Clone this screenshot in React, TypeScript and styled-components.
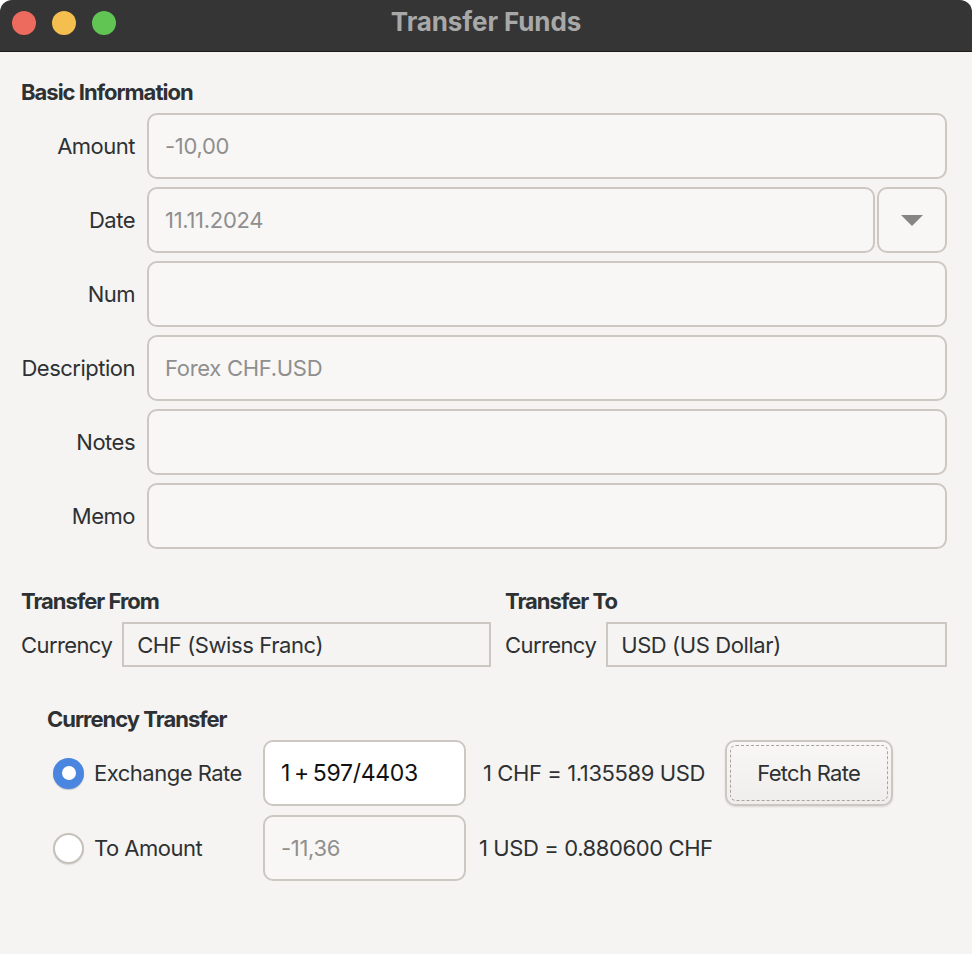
import styled, { createGlobalStyle } from "styled-components";

const GlobalStyle = createGlobalStyle`
  html, body {
    margin: 0;
    padding: 0;
    background: #ffffff;
  }
  body {
    font-family: Inter, "Noto Sans", sans-serif;
  }
`;

const Window = styled.div`
  width: 972px;
  height: 954px;
  display: flex;
  flex-direction: column;
  background: #f5f4f2;
  border-radius: 12px 12px 0 0;
  overflow: hidden;
  color: #2c2c2c;
`;

const TitleBar = styled.div`
  height: 52px;
  flex-shrink: 0;
  background: #353535;
  border-bottom: 1px solid #1c1c1c;
  display: flex;
  align-items: center;
  position: relative;
  box-sizing: border-box;
`;

const Lights = styled.div`
  display: flex;
  gap: 16px;
  padding-left: 12px;
  padding-bottom: 5px;
`;

const Light = styled.span<{ $color: string }>`
  width: 24px;
  height: 24px;
  border-radius: 50%;
  background: ${(p) => p.$color};
`;

const Title = styled.div`
  position: absolute;
  left: 0;
  right: 0;
  top: 6px;
  text-align: center;
  font-size: 26px;
  font-weight: 700;
  letter-spacing: -0.1px;
  color: #a8a8a8;
`;

const Body = styled.div`
  padding: 26px 25px 0 21px;
  display: flex;
  flex-direction: column;
`;

const SectionTitle = styled.div<{ $indent?: number }>`
  font-size: 22px;
  font-weight: 700;
  letter-spacing: -1px;
  color: #2e3133;
  margin-left: ${(p) => p.$indent ?? 0}px;
  height: 28px;
  line-height: 28px;
`;

const FormGrid = styled.div`
  display: grid;
  grid-template-columns: 114px 1fr;
  column-gap: 12px;
  row-gap: 8px;
  margin-top: 7px;
  align-items: center;
`;

const Label = styled.div`
  text-align: right;
  font-size: 22px;
  letter-spacing: -0.5px;
  color: #2e3133;
`;

const Field = styled.div<{ $white?: boolean }>`
  height: 66px;
  box-sizing: border-box;
  border: 2px solid #ccc7c1;
  border-radius: 10px;
  background: ${(p) => (p.$white ? "#ffffff" : "#f8f7f5")};
  display: flex;
  align-items: center;
  padding: 0 16px;
  font-size: 22px;
  letter-spacing: -0.3px;
  color: #8f8f8f;
`;

const DateRow = styled.div`
  display: flex;
  gap: 2px;
  & > ${Field}:first-child {
    flex: 1;
  }
`;

const DropButton = styled(Field)`
  width: 70px;
  justify-content: center;
  padding: 0;
`;

const Triangle = styled.span`
  width: 0;
  height: 0;
  border-left: 11px solid transparent;
  border-right: 11px solid transparent;
  border-top: 11px solid #858585;
`;

const TransferRow = styled.div`
  display: grid;
  grid-template-columns: 470px 1fr;
  column-gap: 14px;
  margin-top: 38px;
`;

const TransferCol = styled.div`
  display: flex;
  flex-direction: column;
  gap: 7px;
`;

const CurrencyLine = styled.div`
  display: flex;
  align-items: center;
  gap: 10px;
`;

const PlainLabel = styled.div`
  font-size: 22px;
  letter-spacing: -0.6px;
  color: #2e3133;
`;

const CurrencyBox = styled.div`
  flex: 1;
  height: 45px;
  box-sizing: border-box;
  border: 2px solid #ccc7c1;
  background: #f5f4f2;
  display: flex;
  align-items: center;
  padding: 0 13px;
  font-size: 22px;
  letter-spacing: -0.4px;
  color: #2e3133;
`;

const CurrencyTransfer = styled.div`
  margin-top: 38px;
  display: flex;
  flex-direction: column;
`;

const RateGrid = styled.div`
  display: grid;
  grid-template-columns: 210px 203px auto auto;
  row-gap: 9px;
  align-items: center;
  margin-top: 7px;
  margin-left: 32px;
  justify-content: start;
`;

const RadioLabel = styled.label`
  display: flex;
  align-items: center;
  gap: 10px;
  font-size: 22px;
  letter-spacing: -0.5px;
  color: #2e3133;
`;

const Radio = styled.span<{ $checked?: boolean }>`
  width: 31px;
  height: 31px;
  box-sizing: border-box;
  border-radius: 50%;
  display: flex;
  align-items: center;
  justify-content: center;
  ${(p) =>
    p.$checked
      ? `background: #4a85e0; box-shadow: 0 1px 1px rgba(0,0,0,0.2);`
      : `background: #ffffff; border: 2px solid #c6c1bb; box-shadow: 0 1px 1px rgba(0,0,0,0.1);`}
  &::after {
    content: "";
    display: ${(p) => (p.$checked ? "block" : "none")};
    width: 14px;
    height: 14px;
    border-radius: 50%;
    background: #ffffff;
  }
`;

const RateText = styled.div<{ $pad: number }>`
  font-size: 22px;
  letter-spacing: -0.4px;
  color: #2e3133;
  padding-left: ${(p) => p.$pad}px;
  white-space: nowrap;
`;

const FetchButton = styled.button`
  margin-left: 12px;
  width: 168px;
  height: 66px;
  border: 2px solid #ccc7c1;
  border-radius: 10px;
  background: linear-gradient(#f8f7f5, #efeeec);
  box-shadow: 0 1px 2px rgba(0, 0, 0, 0.12);
  font-family: inherit;
  font-size: 22px;
  letter-spacing: -0.7px;
  color: #2e3133;
  padding: 3px;
  display: flex;
`;

const FocusRing = styled.span`
  flex: 1;
  border: 1.5px dashed #a8a39e;
  border-radius: 6px;
  display: flex;
  align-items: center;
  justify-content: center;
`;

const ValueText = styled.span<{ $dark?: boolean }>`
  color: ${(p) => (p.$dark ? "#111111" : "#8f8f8f")};
  font-size: ${(p) => (p.$dark ? "23px" : "22px")};
`;

const rows: { label: string; value?: string }[] = [
  { label: "Amount", value: "-10,00" },
  { label: "Date", value: "11.11.2024" },
  { label: "Num" },
  { label: "Description", value: "Forex CHF.USD" },
  { label: "Notes" },
  { label: "Memo" },
];

export default function App() {
  return (
    <>
      <GlobalStyle />
      <Window>
        <TitleBar>
          <Lights>
            <Light $color="#ed6a5e" />
            <Light $color="#f5bf4f" />
            <Light $color="#61c554" />
          </Lights>
          <Title>Transfer Funds</Title>
        </TitleBar>
        <Body>
          <SectionTitle>Basic Information</SectionTitle>
          <FormGrid>
            {rows.flatMap((r) => [
              <Label key={r.label + "-l"}>{r.label}</Label>,
              r.label === "Date" ? (
                <DateRow key={r.label + "-f"}>
                  <Field>{r.value}</Field>
                  <DropButton>
                    <Triangle />
                  </DropButton>
                </DateRow>
              ) : (
                <Field key={r.label + "-f"}>{r.value}</Field>
              ),
            ])}
          </FormGrid>

          <TransferRow>
            <TransferCol>
              <SectionTitle>Transfer From</SectionTitle>
              <CurrencyLine>
                <PlainLabel>Currency</PlainLabel>
                <CurrencyBox>CHF (Swiss Franc)</CurrencyBox>
              </CurrencyLine>
            </TransferCol>
            <TransferCol>
              <SectionTitle>Transfer To</SectionTitle>
              <CurrencyLine>
                <PlainLabel>Currency</PlainLabel>
                <CurrencyBox>USD (US Dollar)</CurrencyBox>
              </CurrencyLine>
            </TransferCol>
          </TransferRow>

          <CurrencyTransfer>
            <SectionTitle $indent={26}>Currency Transfer</SectionTitle>
            <RateGrid>
              <RadioLabel>
                <Radio $checked />
                Exchange Rate
              </RadioLabel>
              <Field $white>
                <ValueText $dark>1{"\u2009"}+{"\u2009"}597/4403</ValueText>
              </Field>
              <RateText $pad={17}>1 CHF = 1.135589 USD</RateText>
              <FetchButton>
                <FocusRing>Fetch Rate</FocusRing>
              </FetchButton>

              <RadioLabel>
                <Radio />
                To Amount
              </RadioLabel>
              <Field>
                <ValueText>-11,36</ValueText>
              </Field>
              <RateText $pad={13}>1 USD = 0.880600 CHF</RateText>
              <span />
            </RateGrid>
          </CurrencyTransfer>
        </Body>
      </Window>
    </>
  );
}
